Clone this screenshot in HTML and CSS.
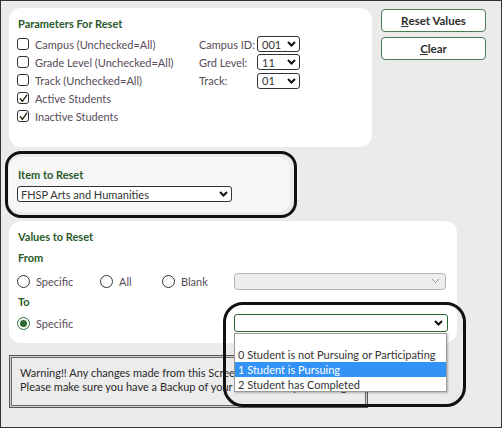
FILE: index.html
```html
<!DOCTYPE html>
<html>
<head>
<meta charset="utf-8">
<link rel="stylesheet" href="styles.css">
</head>
<body>
<div class="page">
  <div class="top">
    <div class="panel params">
      <div class="title">Parameters For Reset</div>
      <div class="params-body">
        <div class="checks">
          <div class="chk-row"><span class="cb"></span><span class="lbl">Campus (Unchecked=All)</span></div>
          <div class="chk-row"><span class="cb"></span><span class="lbl">Grade Level (Unchecked=All)</span></div>
          <div class="chk-row"><span class="cb"></span><span class="lbl">Track (Unchecked=All)</span></div>
          <div class="chk-row"><span class="cb"><svg width="9" height="9" viewBox="0 0 9 9"><path d="M1.3 4.8 L3.4 7.4 L7.8 1.2" fill="none" stroke="#1f2a10" stroke-width="1.4" stroke-linecap="round" stroke-linejoin="round"/></svg></span><span class="lbl">Active Students</span></div>
          <div class="chk-row"><span class="cb"><svg width="9" height="9" viewBox="0 0 9 9"><path d="M1.3 4.8 L3.4 7.4 L7.8 1.2" fill="none" stroke="#1f2a10" stroke-width="1.4" stroke-linecap="round" stroke-linejoin="round"/></svg></span><span class="lbl">Inactive Students</span></div>
        </div>
        <div class="fields">
          <div class="f-row"><span class="f-lbl">Campus ID:</span><div class="sel sel-sm"><span class="val">001</span><svg class="chev" width="9" height="6" viewBox="0 0 9 6"><path d="M1 1 L4.5 4.5 L8 1" fill="none" stroke="#111" stroke-width="2"/></svg></div></div>
          <div class="f-row"><span class="f-lbl">Grd Level:</span><div class="sel sel-sm"><span class="val">11</span><svg class="chev" width="9" height="6" viewBox="0 0 9 6"><path d="M1 1 L4.5 4.5 L8 1" fill="none" stroke="#111" stroke-width="2"/></svg></div></div>
          <div class="f-row"><span class="f-lbl">Track:</span><div class="sel sel-sm"><span class="val">01</span><svg class="chev" width="9" height="6" viewBox="0 0 9 6"><path d="M1 1 L4.5 4.5 L8 1" fill="none" stroke="#111" stroke-width="2"/></svg></div></div>
        </div>
      </div>
    </div>
    <div class="buttons">
      <div class="btn"><u>R</u>eset Values</div>
      <div class="btn"><u>C</u>lear</div>
    </div>
  </div>

  <div class="panel item">
    <div class="title">Item to Reset</div>
    <div class="sel sel-item"><span class="val">FHSP Arts and Humanities</span><svg class="chev" width="9" height="6" viewBox="0 0 9 6"><path d="M1 1 L4.5 4.5 L8 1" fill="none" stroke="#111" stroke-width="2"/></svg></div>
  </div>

  <div class="panel values">
    <div class="title">Values to Reset</div>
    <div class="sub">From</div>
    <div class="radio-row">
      <div class="opt w-spec"><span class="rb"></span><span class="lbl">Specific</span></div>
      <div class="opt w-all"><span class="rb"></span><span class="lbl">All</span></div>
      <div class="opt w-blank"><span class="rb"></span><span class="lbl">Blank</span></div>
      <div class="sel sel-dis"><svg class="chev" width="9" height="6" viewBox="0 0 9 6"><path d="M1 1 L4.5 4.5 L8 1" fill="none" stroke="#999" stroke-width="1"/></svg></div>
    </div>
    <div class="sub sub-to">To</div>
    <div class="radio-row to-row">
      <div class="opt w-to"><span class="rb on"><span class="dot"></span></span><span class="lbl">Specific</span></div>
      <div class="sel sel-to"><svg class="chev" width="9" height="6" viewBox="0 0 9 6"><path d="M1 1 L4.5 4.5 L8 1" fill="none" stroke="#111" stroke-width="2"/></svg></div>
    </div>
  </div>

  <div class="warning">
    <div class="wline">Warning!! Any changes made from this Screen cannot be undone.</div>
    <div class="wline">Please make sure you have a Backup of your data before proceeding.</div>
  </div>

  <div class="dropdown">
    <div class="dd-opt dd-blank"></div>
    <div class="dd-opt">0 Student is not Pursuing or Participating</div>
    <div class="dd-opt dd-hl">1 Student is Pursuing</div>
    <div class="dd-opt">2 Student has Completed</div>
  </div>

  <div class="annot annot-item"></div>
  <div class="annot annot-dd"></div>
</div>
</body>
</html>
```

FILE: styles.css
```css
html, body {
  margin: 0;
  padding: 0;
}
body {
  font-family: Lato, "Open Sans", Arial, sans-serif;
  font-size: 11px;
  color: #333;
}
.page {
  position: relative;
  width: 502px;
  height: 428px;
  box-sizing: border-box;
  border: 1px solid #333;
  background: #ebebeb;
  padding: 7px 0 0 8px;
}
.top {
  display: flex;
  align-items: flex-start;
  gap: 9px;
}
.panel {
  background: #fff;
  border-radius: 12px;
  box-sizing: border-box;
  padding: 9px 8px 0 8px;
}
.title {
  color: #2b5a2b;
  font-weight: 700;
  font-size: 11px;
  line-height: 14px;
  padding-left: 1px;
}
.params {
  width: 363px;
  height: 139px;
}
.params-body {
  display: flex;
  margin-top: 4px;
}
.checks {
  width: 182px;
  display: flex;
  flex-direction: column;
}
.chk-row {
  height: 18px;
  display: flex;
  align-items: center;
  gap: 6px;
}
.cb {
  width: 12px;
  height: 12px;
  box-sizing: border-box;
  border: 1.3px solid #333;
  border-radius: 3px;
  background: #fff;
  display: flex;
  align-items: center;
  justify-content: center;
}
.lbl {
  color: #574b5a;
  font-size: 11px;
  white-space: nowrap;
}
.fields {
  display: flex;
  flex-direction: column;
}
.f-row {
  height: 18.3px;
  display: flex;
  align-items: center;
}
.f-lbl {
  width: 58px;
  flex-shrink: 0;
  white-space: nowrap;
  color: #574b5a;
  font-size: 11px;
}
.sel {
  display: flex;
  align-items: center;
  justify-content: space-between;
  box-sizing: border-box;
  height: 16px;
  border: 1.3px solid #333;
  border-radius: 3px;
  background: #fff;
  padding: 0 3px 0 4px;
}
.sel .val {
  color: #333;
  font-size: 11px;
  white-space: nowrap;
}
.sel-sm {
  width: 43px;
}
.buttons {
  display: flex;
  flex-direction: column;
  gap: 5px;
  margin-top: 1px;
}
.btn {
  width: 105px;
  height: 23px;
  box-sizing: border-box;
  border: 1px solid #4a7b55;
  border-radius: 4px;
  background: #fff;
  display: flex;
  align-items: center;
  justify-content: center;
  font-weight: 700;
  font-size: 11.5px;
  color: #2e2e2e;
}
.item {
  margin-top: 10px;
  width: 281px;
  height: 55px;
  background: #f7f7f7;
  padding-top: 11px;
}
.sel-item {
  margin-top: 4px;
  width: 215px;
  padding-left: 3px;
}
.values {
  margin-top: 9px;
  width: 448px;
  height: 122px;
}
.sub {
  color: #2b5a2b;
  font-weight: 700;
  line-height: 14px;
  margin-top: 7px;
  padding-left: 1px;
}
.sub-to {
  margin-top: 5px;
}
.radio-row {
  display: flex;
  align-items: center;
  height: 18px;
  margin-top: 7px;
}
.to-row {
  margin-top: 5px;
}
.opt {
  display: flex;
  align-items: center;
  gap: 6px;
}
.w-spec { width: 83px; }
.w-all { width: 62px; }
.w-blank { width: 72px; }
.w-to { width: 217px; }
.rb {
  width: 13px;
  height: 13px;
  box-sizing: border-box;
  border: 1.3px solid #333;
  border-radius: 50%;
  background: #fff;
  display: flex;
  align-items: center;
  justify-content: center;
}
.rb.on {
  border-color: #2d6a33;
}
.dot {
  width: 7px;
  height: 7px;
  border-radius: 50%;
  background: #2d6a33;
}
.sel-dis {
  width: 212px;
  height: 17px;
  background: #ededed;
  border: 1px solid #b5b5b5;
  border-radius: 4px;
  padding-right: 5px;
  justify-content: flex-end;
}
.sel-to {
  width: 214px;
  height: 18px;
  border: 1.5px solid #2b632f;
  justify-content: flex-end;
  padding-right: 4px;
}
.warning {
  margin-top: 12px;
  width: 359px;
  height: 53px;
  box-sizing: border-box;
  border: 1px solid #555;
  box-shadow: inset 0 0 0 1px #d0d0d0, inset 0 0 0 2px #6a6a6a;
  background: #ececec;
  padding: 10px 0 0 10px;
}
.wline {
  white-space: nowrap;
  line-height: 14px;
  font-size: 11px;
  color: #2a2a2a;
}
.dropdown {
  position: absolute;
  left: 233px;
  top: 332px;
  width: 213px;
  height: 59px;
  box-sizing: border-box;
  background: #fff;
  border: 1px solid #9a9a9a;
  box-shadow: 1px 1px 2px rgba(0,0,0,0.25);
}
.dd-opt {
  height: 15px;
  line-height: 15px;
  padding-left: 3px;
  font-size: 11px;
  color: #333;
  white-space: nowrap;
}
.dd-blank {
  height: 13px;
}
.dd-hl {
  background: #3392f5;
  color: #fff;
}
.annot {
  position: absolute;
  box-sizing: border-box;
  border: 3px solid #111;
}
.annot-item {
  left: 4px;
  top: 150px;
  width: 292px;
  height: 67px;
  border-radius: 16px;
}
.annot-dd {
  left: 222px;
  top: 301px;
  width: 243px;
  height: 105px;
  border-radius: 20px;
}
```
